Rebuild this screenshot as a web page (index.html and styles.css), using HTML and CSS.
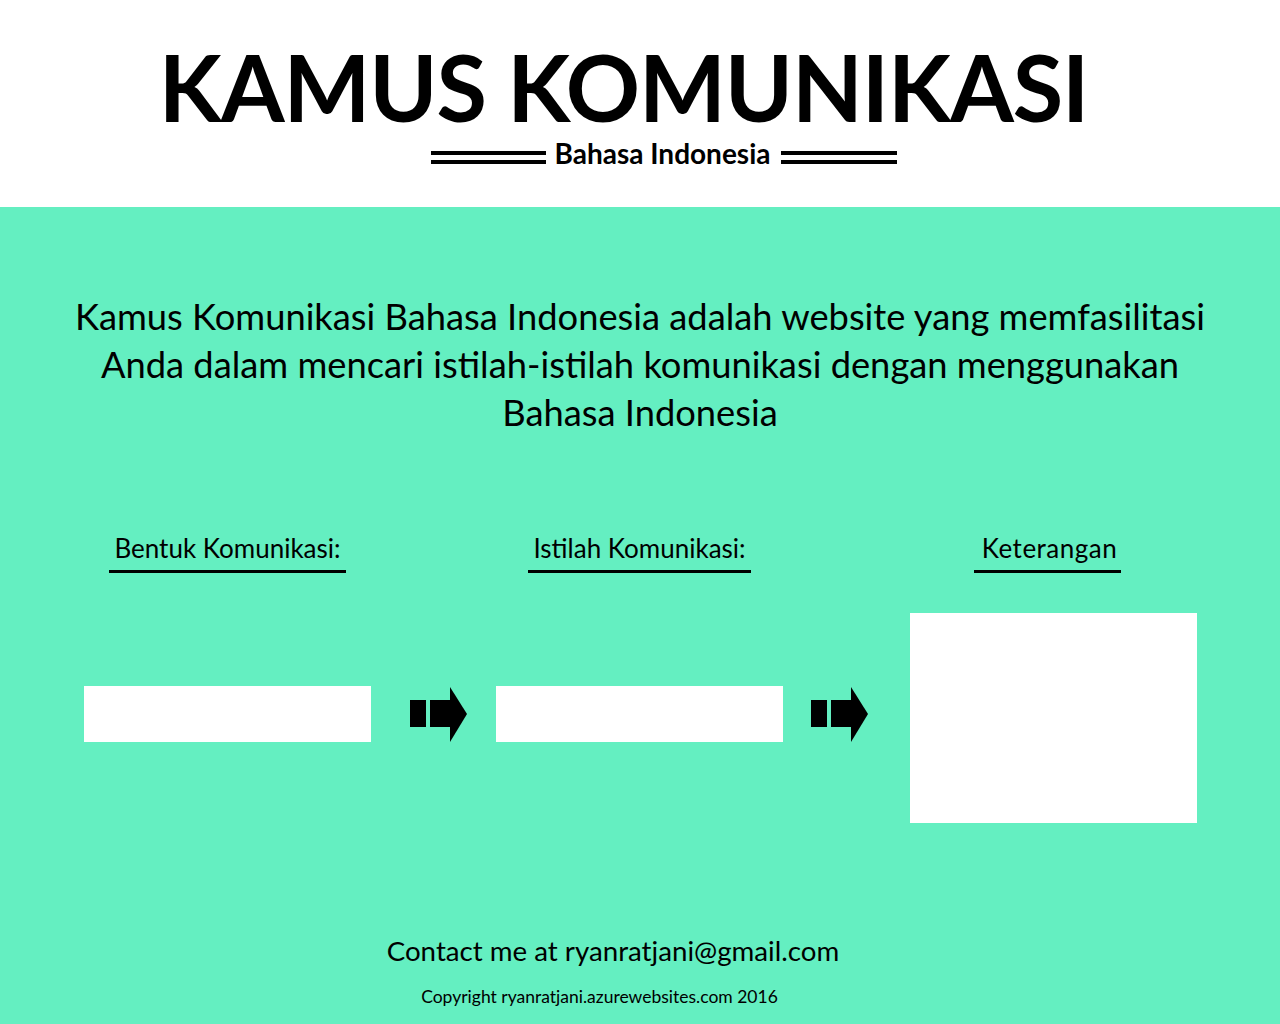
FILE: index.html
```html
<!DOCTYPE html>
<html lang="id">
<head>
<meta charset="utf-8">
<title>Kamus Komunikasi</title>
<link rel="stylesheet" href="styles.css">
</head>
<body>
<header class="masthead">
  <h1 class="title">KAMUS KOMUNIKASI</h1>
  <div class="subtitle">
    <span class="rule rule-left"></span>
    <span class="sub-text">Bahasa Indonesia</span>
    <span class="rule rule-right"></span>
  </div>
</header>
<main class="content">
  <p class="intro">Kamus Komunikasi Bahasa Indonesia adalah website yang memfasilitasi<br>Anda dalam mencari istilah-istilah komunikasi dengan menggunakan<br>Bahasa Indonesia</p>
  <div class="board">
    <div class="label-cell"><span class="label">Bentuk Komunikasi:</span></div>
    <div></div>
    <div class="label-cell"><span class="label">Istilah Komunikasi:</span></div>
    <div></div>
    <div class="label-cell label-cell-3"><span class="label label-wide">Keterangan</span></div>

    <input class="field" type="text">
    <div class="arrow arrow-1">
      <svg width="57" height="55" viewBox="0 0 57 55"><rect x="0" y="13" width="16" height="27"/><rect x="20" y="13" width="21" height="27"/><polygon points="40,0 57,27 40,55"/></svg>
    </div>
    <input class="field" type="text">
    <div class="arrow arrow-2">
      <svg width="57" height="55" viewBox="0 0 57 55"><rect x="0" y="13" width="16" height="27"/><rect x="20" y="13" width="21" height="27"/><polygon points="40,0 57,27 40,55"/></svg>
    </div>
    <textarea class="result"></textarea>
  </div>
  <footer class="footer">
    <p class="contact">Contact me at ryanratjani@gmail.com</p>
    <p class="copyright">Copyright ryanratjani.azurewebsites.com 2016</p>
  </footer>
</main>
</body>
</html>
```

FILE: styles.css
```css
html, body {
  margin: 0;
  padding: 0;
}
body {
  font-family: Lato, "Open Sans", "Liberation Sans", sans-serif;
  color: #000;
  background: #64efc1;
}
.masthead {
  background: #fff;
  height: 207px;
  box-sizing: border-box;
  padding-top: 37px;
  display: flex;
  flex-direction: column;
  align-items: center;
}
.title {
  margin: 0 33px 0 0;
  font-size: 92px;
  line-height: 1.08;
  font-weight: 700;
  letter-spacing: -1.1px;
  white-space: nowrap;
}
.subtitle {
  margin: 2px 0 0 48px;
  display: flex;
  align-items: flex-start;
  height: 30px;
}
.sub-text {
  font-size: 28px;
  line-height: 30px;
  font-weight: 700;
}
.rule {
  display: block;
  margin-top: 13px;
  height: 5px;
  border-top: 4px solid #000;
  border-bottom: 4px solid #000;
}
.rule-left {
  width: 115px;
  margin-right: 9px;
}
.rule-right {
  width: 116px;
  margin-left: 11px;
}
.content {
  padding-top: 85px;
  height: 817px;
  box-sizing: border-box;
}
.intro {
  margin: 0;
  text-align: center;
  font-size: 36.3px;
  line-height: 48px;
  font-weight: 400;
}
.board {
  margin: 97px 0 0 84px;
  display: grid;
  grid-template-columns: 287px 125px 287px 127px 287px;
  grid-template-rows: auto auto;
  row-gap: 40px;
}
.label-cell {
  display: flex;
  justify-content: center;
}
.label-cell-3 {
  padding-right: 12px;
}
.label {
  display: block;
  font-size: 26px;
  line-height: 30px;
  padding: 0 5px 7px;
  border-bottom: 3px solid #000;
  white-space: nowrap;
}
.label-wide {
  letter-spacing: 0.5px;
  padding: 0 4px 7px 8px;
}
.field {
  margin: 73px 0 0;
  width: 287px;
  height: 56px;
  border: none;
  background: #fff;
  box-sizing: border-box;
  padding: 0 10px;
  font: inherit;
  font-size: 20px;
  outline: none;
}
.arrow {
  margin-top: 74px;
  line-height: 0;
}
.arrow svg {
  fill: #000;
  display: block;
}
.arrow-1 {
  padding-left: 39px;
}
.arrow-2 {
  padding-left: 28px;
}
.result {
  width: 287px;
  height: 210px;
  border: none;
  background: #fff;
  box-sizing: border-box;
  resize: none;
  margin: 0;
  padding: 8px;
  font: inherit;
  outline: none;
}
.footer {
  margin-top: 112px;
  text-align: center;
}
.contact {
  margin: 0;
  padding-right: 54px;
  font-size: 27.7px;
  line-height: 32px;
}
.copyright {
  margin: 20px 0 0;
  padding-right: 81px;
  font-size: 17.5px;
  line-height: 20px;
}
```
